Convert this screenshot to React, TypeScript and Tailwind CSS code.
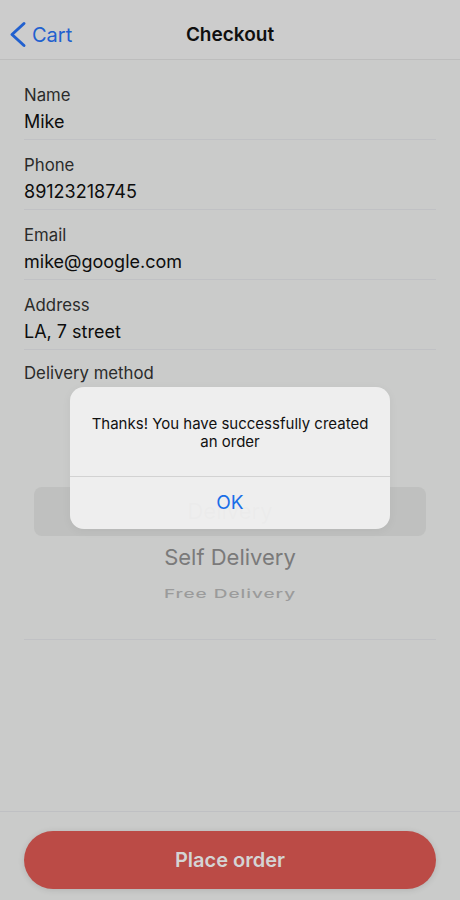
import React from "react";

const font = { fontFamily: 'Inter, "Noto Sans", "Liberation Sans", sans-serif' };

function Field({ label, value, first }: { label: string; value: string; first?: boolean }) {
  return (
    <div className={`border-b border-[#c0c1c4] ${first ? "pt-[24px]" : "pt-[14px]"} pb-[4px]`}>
      <div className="text-[16.8px] leading-[22px] text-[#2b2b2b]">{label}</div>
      <div className="mt-[3px] text-[18px] leading-[26px] text-[#0d0d0d]">{value}</div>
    </div>
  );
}

export default function App() {
  return (
    <div className="relative flex h-[900px] w-[460px] flex-col overflow-hidden bg-[#cacbca]" style={font}>
      <header className="relative flex h-[60px] items-center justify-center border-b border-[#bdbdbd] bg-[#cccccc] pt-[12px]">
        <div className="absolute left-[9px] top-[21px] flex items-center">
          <svg width="18" height="28" viewBox="0 0 18 28" fill="none">
            <polyline points="15,2.5 3,13.5 15,24.5" stroke="#2160cf" strokeWidth="3" strokeLinecap="round" strokeLinejoin="round" />
          </svg>
          <span className="ml-[5px] text-[20px] leading-[26px] text-[#2160cf]">Cart</span>
        </div>
        <h1 className="text-[19px] font-semibold text-[#0f0f0f]">Checkout</h1>
      </header>

      <main className="flex-1 px-6">
        <Field first label="Name" value="Mike" />
        <Field label="Phone" value="89123218745" />
        <Field label="Email" value="mike@google.com" />
        <Field label="Address" value="LA, 7 street" />
        <div className="border-b border-[#c0c1c4] pt-[12px] pb-[28px]">
          <div className="text-[16.8px] leading-[22px] text-[#2b2b2b]">Delivery method</div>
          <div className="pt-[59px]">
            <div className="flex h-[44px] items-center justify-center text-[20px] text-[#9a9a9a] scale-y-[0.85]">Pickup</div>
            <div className="mx-[10px] flex h-[49px] items-center justify-center rounded-lg bg-[#bfc0bf] text-[22px] text-[#222]">Delivery</div>
            <div className="flex h-[42px] items-center justify-center text-[22px] text-[#7a7a7a]">Self Delivery</div>
            <div className="flex h-[33px] items-center justify-center">
              <span className="inline-block scale-y-[0.65] text-[19px] font-medium tracking-[0.05em] text-[#9b9b9b]">Free Delivery</span>
            </div>
          </div>
        </div>
      </main>

      <footer className="border-t border-[#bfc0c3] px-6 pt-[19px] pb-[11px]">
        <button className="flex h-[58px] w-full items-center justify-center rounded-full bg-[#bb4b46] text-[20px] font-semibold text-[#d4d4d4] shadow-[0_1px_6px_rgba(0,0,0,0.12)]">
          Place order
        </button>
      </footer>

      <div className="absolute left-[70px] top-[387px] w-[320px] overflow-hidden rounded-[14px] bg-[#efefef]/[0.985] shadow-[0_2px_10px_rgba(0,0,0,0.05)]">
        <div className="px-5 pt-[28px] pb-[25px] text-center text-[15px] leading-[18px] text-[#111]">
          Thanks! You have successfully created an order
        </div>
        <div className="h-px bg-[#d2d2d2]" />
        <div className="flex h-[52px] items-center justify-center text-[19px] text-[#1a6ee8]">OK</div>
      </div>
    </div>
  );
}
